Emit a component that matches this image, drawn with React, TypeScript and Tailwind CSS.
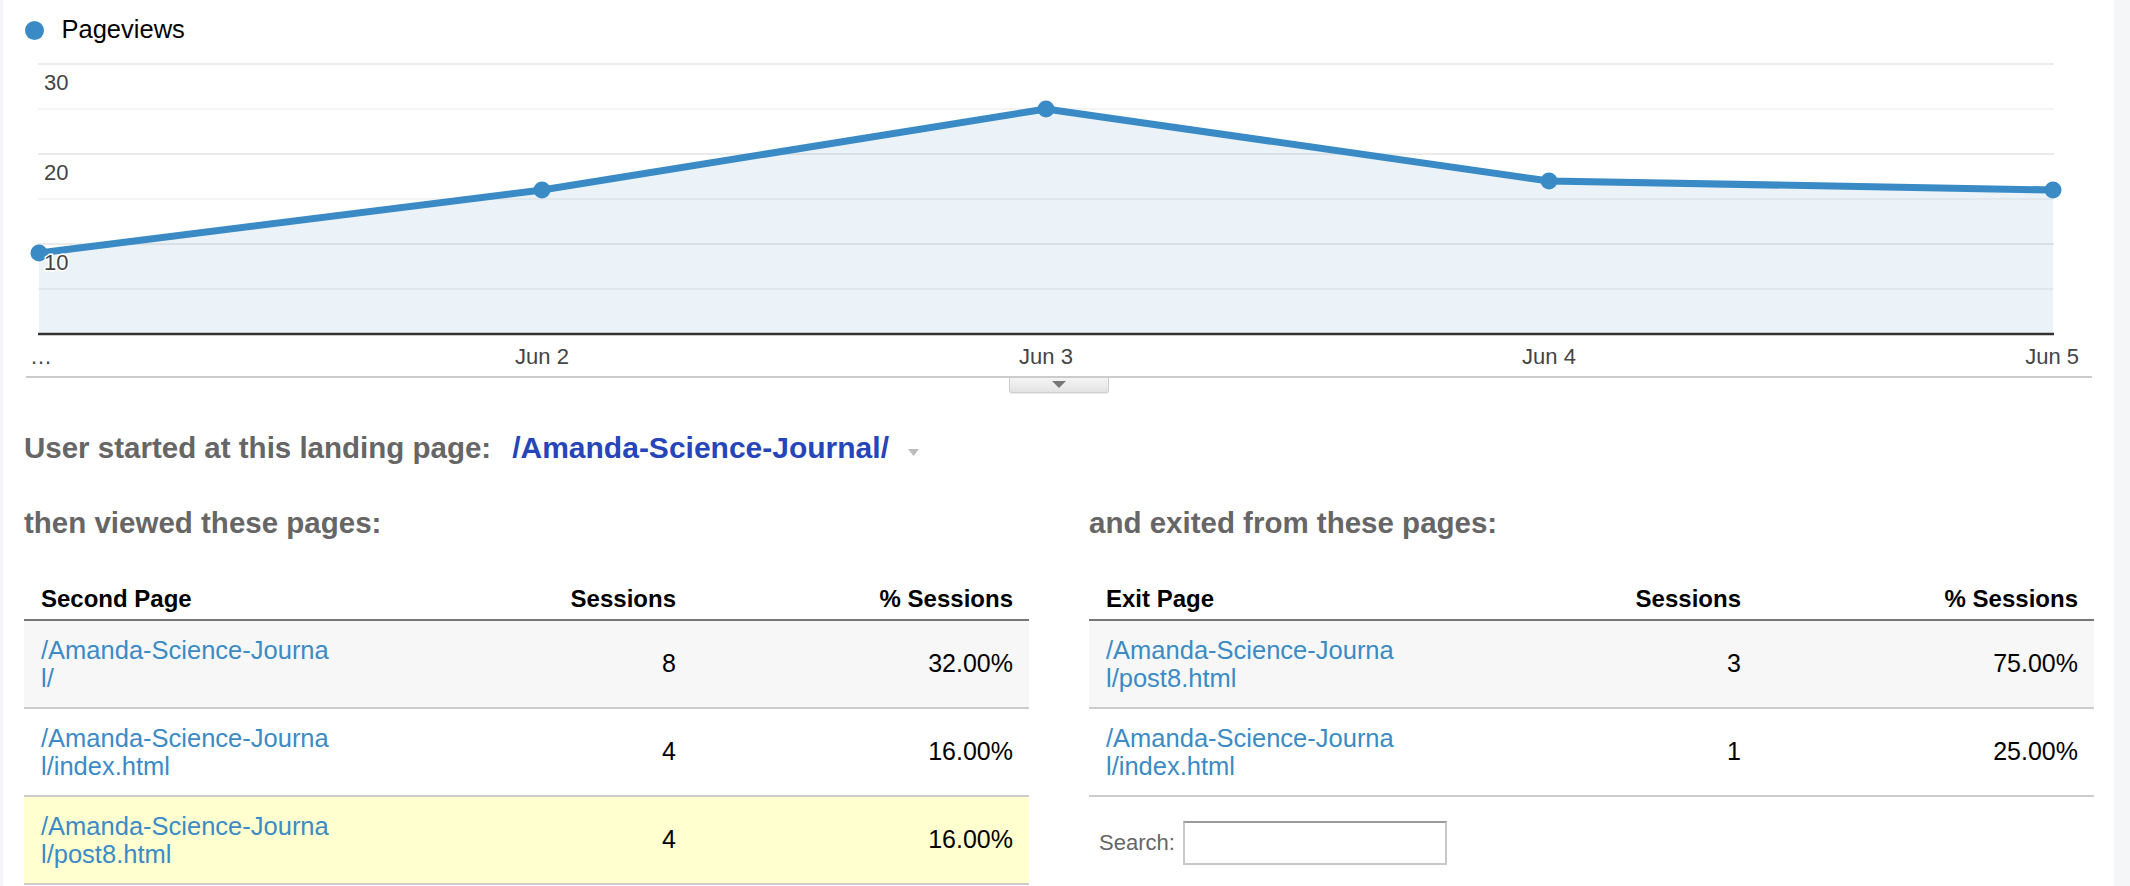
type Row = {
  path: [string, string];
  sessions: number;
  pct: string;
  highlight?: boolean;
};

const secondPages: Row[] = [
  { path: ["/Amanda-Science-Journa", "l/"], sessions: 8, pct: "32.00%" },
  { path: ["/Amanda-Science-Journa", "l/index.html"], sessions: 4, pct: "16.00%" },
  { path: ["/Amanda-Science-Journa", "l/post8.html"], sessions: 4, pct: "16.00%", highlight: true },
];

const exitPages: Row[] = [
  { path: ["/Amanda-Science-Journa", "l/post8.html"], sessions: 3, pct: "75.00%" },
  { path: ["/Amanda-Science-Journa", "l/index.html"], sessions: 1, pct: "25.00%" },
];

// chart coords are page pixels (svg viewBox starts at x=3, y=40)
const points = [
  { x: 39, v: 9 },
  { x: 542, v: 16 },
  { x: 1046, v: 25 },
  { x: 1549, v: 17 },
  { x: 2053, v: 16 },
];
const yOf = (v: number) => 334 - 9 * v;

const BLUE = "#3a8bc5";

const Chart = () => {
  const line = points.map((p) => `${p.x},${yOf(p.v)}`).join(" ");
  const area = `39,334 ${line} 2053,334`;
  const grid = [
    { y: 64, major: true },
    { y: 109, major: false },
    { y: 154, major: true },
    { y: 199, major: false },
    { y: 244, major: true },
    { y: 289, major: false },
  ];
  const labelFont = { fontFamily: "'Liberation Sans', Arial, sans-serif" };

  return (
    <svg width={2111} height={335} viewBox="3 40 2111 335" className="block">
      <polygon points={area} fill={BLUE} fillOpacity={0.1} />
      {grid.map((g) => (
        <line
          key={g.y}
          x1={38}
          x2={2054}
          y1={g.y}
          y2={g.y}
          stroke="#000"
          strokeOpacity={g.major ? 0.08 : 0.045}
          strokeWidth={2}
        />
      ))}
      <line x1={38} x2={2054} y1={334} y2={334} stroke="#333" strokeWidth={2.5} />
      <polyline points={line} fill="none" stroke={BLUE} strokeWidth={7} strokeLinejoin="round" />
      {points.map((p) => (
        <circle key={p.x} cx={p.x} cy={yOf(p.v)} r={8.5} fill={BLUE} />
      ))}
      {[
        { t: "30", y: 90 },
        { t: "20", y: 180 },
        { t: "10", y: 270 },
      ].map((l) => (
        <text
          key={l.t}
          x={44}
          y={l.y}
          fontSize={22}
          fill="#444"
          stroke="#fff"
          strokeWidth={3}
          paintOrder="stroke"
          style={labelFont}
        >
          {l.t}
        </text>
      ))}
      <text x={30} y={364} fontSize={22} fill="#444" style={labelFont}>
        …
      </text>
      {[
        { t: "Jun 2", x: 542, anchor: "middle" },
        { t: "Jun 3", x: 1046, anchor: "middle" },
        { t: "Jun 4", x: 1549, anchor: "middle" },
        { t: "Jun 5", x: 2079, anchor: "end" },
      ].map((l) => (
        <text key={l.t} x={l.x} y={364} fontSize={22} fill="#444" textAnchor={l.anchor} style={labelFont}>
          {l.t}
        </text>
      ))}
    </svg>
  );
};

const PageTable = ({ title, rows }: { title: string; rows: Row[] }) => (
  <div className="mt-[37px] text-black">
    <div className="flex h-[46px] items-end border-b-2 border-[#777] pb-[8px] text-[24px] font-bold leading-none">
      <div className="w-[480px] pl-[17px]">{title}</div>
      <div className="w-[172px] text-right">Sessions</div>
      <div className="flex-1 pr-[16px] text-right">% Sessions</div>
    </div>
    {rows.map((r, i) => (
      <div
        key={i}
        className={`flex h-[88px] items-center border-b-2 border-[#ccc] text-[25px] ${
          r.highlight ? "bg-[#ffffcf]" : i % 2 === 0 ? "bg-[#f7f7f7]" : "bg-white"
        }`}
      >
        <div className="w-[480px] pl-[17px] text-[25.5px] leading-[28px] text-[#3b8bc6]">
          {r.path[0]}
          <br />
          {r.path[1]}
        </div>
        <div className="w-[172px] text-right">{r.sessions}</div>
        <div className="flex-1 pr-[16px] text-right">{r.pct}</div>
      </div>
    ))}
  </div>
);

const App = () => {
  return (
    <div className="flex h-screen overflow-hidden bg-white font-['Liberation_Sans',Arial,sans-serif]">
      <div className="w-[3px] shrink-0 bg-[#f3f5f8]" />
      <main className="min-w-0 flex-1">
        {/* legend */}
        <div className="mt-[20px] flex h-[20px] items-center pl-[21.5px]">
          <span className="h-[19px] w-[19px] rounded-full bg-[#3a8bc5]" />
          <span className="ml-[18px] text-[25.5px] leading-none text-black">Pageviews</span>
        </div>

        <Chart />

        {/* collapse handle */}
        <div className="ml-[23px] mt-px w-[2066px]">
          <div className="h-[2px] bg-[#ccc]" />
          <div className="mx-auto flex h-[15px] w-[100px] items-start justify-center rounded-b-[3px] border border-t-0 border-[#cfcfcf] bg-gradient-to-b from-[#f5f5f5] to-[#e3e3e3] pt-[3px] shadow-[0_1px_1px_rgba(0,0,0,0.08)]">
            <svg width="14" height="7" viewBox="0 0 14 7">
              <polygon points="0,0 14,0 7,7" fill="#777" />
            </svg>
          </div>
        </div>

        {/* landing page */}
        <div className="ml-[21px] mt-[40px] flex items-center text-[29.5px] font-bold leading-none">
          <span className="text-[#666]">User started at this landing page:</span>
          <span className="ml-[21px] text-[30px] text-[#2545b8]">/Amanda-Science-Journal/</span>
          <svg width="11" height="7" viewBox="0 0 11 7" className="ml-[19px] mt-[8px]">
            <polygon points="0,0 11,0 5.5,7" fill="#bbb" />
          </svg>
        </div>

        <div className="mt-[45px] grid grid-cols-2 gap-x-[60px] pl-[21px] pr-[20px]">
          <div>
            <h2 className="text-[29.5px] font-bold leading-none text-[#666]">then viewed these pages:</h2>
            <PageTable title="Second Page" rows={secondPages} />
          </div>
          <div>
            <h2 className="text-[29.5px] font-bold leading-none text-[#666]">and exited from these pages:</h2>
            <PageTable title="Exit Page" rows={exitPages} />
            <div className="mt-[24px] flex items-center pl-[10px] text-[22px] text-[#666]">
              <span>Search:</span>
              <input
                type="text"
                className="ml-[8px] h-[44px] w-[264px] border-2 border-[#c8c8c8] border-t-[#9a9a9a] bg-white outline-none"
              />
            </div>
          </div>
        </div>
      </main>
      <div className="w-[16px] shrink-0 bg-[#f5f6f8]" />
    </div>
  );
};

export default App;
